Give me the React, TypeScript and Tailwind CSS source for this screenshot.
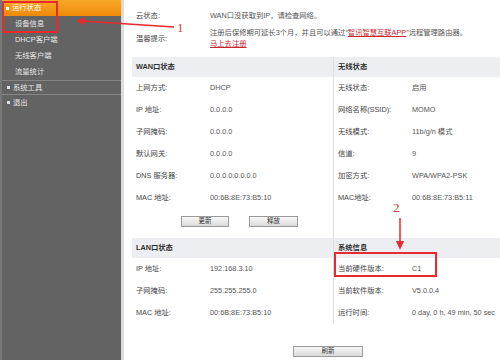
import type { ReactNode } from 'react';

const font = { fontFamily: '"Liberation Sans", "Noto Sans CJK SC", sans-serif' };

type Row = { label: string; value: string };

const wanRows: Row[] = [
  { label: '上网方式:', value: 'DHCP' },
  { label: 'IP 地址:', value: '0.0.0.0' },
  { label: '子网掩码:', value: '0.0.0.0' },
  { label: '默认网关:', value: '0.0.0.0' },
  { label: 'DNS 服务器:', value: '0.0.0.0:0.0.0.0' },
  { label: 'MAC 地址:', value: '00:6B:8E:73:B5:10' },
];

const wifiRows: Row[] = [
  { label: '无线状态:', value: '启用' },
  { label: '网络名称(SSID):', value: 'MOMO' },
  { label: '无线模式:', value: '11b/g/n 模式' },
  { label: '信道:', value: '9' },
  { label: '加密方式:', value: 'WPA/WPA2-PSK' },
  { label: 'MAC地址:', value: '00:6B:8E:73:B5:11' },
];

const lanRows: Row[] = [
  { label: 'IP 地址:', value: '192.168.3.10' },
  { label: '子网掩码:', value: '255.255.255.0' },
  { label: 'MAC 地址:', value: '00:6B:8E:73:B5:10' },
];

const sysRows: Row[] = [
  { label: '当前硬件版本:', value: 'C1' },
  { label: '当前软件版本:', value: 'V5.0.0.4' },
  { label: '运行时间:', value: '0 day, 0 h, 49 min, 50 sec' },
];

function InfoRows({ rows }: { rows: Row[] }) {
  return (
    <div className="flex flex-col">
      {rows.map((row) => (
        <div key={row.label} className="flex h-[22px] items-center pl-[4px]">
          <span className="w-[74px] shrink-0 text-[#444]">{row.label}</span>
          <span className="text-[#555]">{row.value}</span>
        </div>
      ))}
    </div>
  );
}

function Header({ children }: { children: ReactNode }) {
  return <div className="flex h-[20px] items-center bg-[#eceef1] pl-[4px] font-bold text-[#333]">{children}</div>;
}

function Btn({ children, className }: { children: ReactNode; className?: string }) {
  return (
    <div
      className={`flex h-[11px] items-center justify-center border border-[#9a9a9a] bg-gradient-to-b from-[#f7f7f7] to-[#dadada] text-[6.5px] text-[#333] ${className ?? ''}`}
    >
      {children}
    </div>
  );
}

const menu = ['设备信息', 'DHCP客户端', '无线客户端', '流量统计'];

export default function App() {
  return (
    <div className="relative flex h-[360px] w-[500px] overflow-hidden bg-white text-[7.3px] leading-none" style={font}>
      {/* sidebar */}
      <aside className="flex w-[121px] shrink-0 flex-col border-l-[2px] border-[#777] bg-[#636363] text-[#e6e6e6]">
        <div className="flex h-[16px] items-center gap-[3px] bg-gradient-to-b from-[#f9a825] to-[#ef8a05] pl-[4px] text-white">
          <span className="h-[3px] w-[3px] bg-white" />
          运行状态
        </div>
        {menu.map((item) => (
          <div key={item} className="flex h-[16px] items-center pl-[13px]">
            {item}
          </div>
        ))}
        <div className="flex h-[15px] items-center gap-[3px] border-y border-[#858585] pl-[5px]">
          <span className="h-[3px] w-[3px] bg-[#ddd]" />
          系统工具
        </div>
        <div className="flex h-[15px] items-center gap-[3px] pl-[5px]">
          <span className="h-[3px] w-[3px] bg-[#ddd]" />
          退出
        </div>
      </aside>
      <div className="w-[3px] shrink-0 bg-[#dcdcdc]" />

      {/* content */}
      <main className="flex flex-1 flex-col pl-[8px]">
        <div className="flex flex-col pl-[4px] pt-[11px]">
          <div className="flex h-[9px] items-center">
            <span className="w-[74px] shrink-0 text-[#444]">云状态:</span>
            <span className="text-[#555]">WAN口没获取到IP，请检查网络。</span>
          </div>
          <div className="mt-[9px] flex items-center">
            <span className="w-[74px] shrink-0 text-[#444]">温馨提示:</span>
            <div className="flex flex-col gap-[4px] text-[#555]">
              <span>
                注册后保修期可延长3个月，并且可以通过“<span className="text-[#c7282e] underline">智讯智慧互联APP</span>”远程管理路由器。
              </span>
              <span className="text-[#c7282e] underline">马上去注册</span>
            </div>
          </div>
        </div>

        <div className="mt-[9px] grid grid-cols-[201px_1fr]">
          <div className="flex flex-col">
            <Header>WAN口状态</Header>
            <InfoRows rows={wanRows} />
            <div className="flex h-[29px] pl-[49px] pt-[7px]">
              <Btn className="w-[48px]">更新</Btn>
              <Btn className="ml-[20px] w-[49px]">释放</Btn>
            </div>
          </div>
          <div className="flex flex-col border-l border-[#dedede]">
            <Header>无线状态</Header>
            <InfoRows rows={wifiRows} />
          </div>

          <div className="flex flex-col">
            <Header>LAN口状态</Header>
            <InfoRows rows={lanRows} />
          </div>
          <div className="flex flex-col border-l border-[#dedede]">
            <Header>系统信息</Header>
            <InfoRows rows={sysRows} />
          </div>
        </div>

        <div className="flex pl-[161px] pt-[22px]">
          <Btn className="w-[70px]">刷新</Btn>
        </div>
      </main>

      {/* annotations */}
      <div className="absolute left-[2px] top-[1px] h-[32px] w-[56px] border-2 border-[#e62a2e]" />
      <div className="absolute left-[334px] top-[252px] h-[25px] w-[103px] border-2 border-[#e62a2e]" />
      <svg className="absolute left-0 top-0" width="500" height="360" viewBox="0 0 500 360">
        <line x1="174" y1="27" x2="82" y2="21" stroke="#e62a2e" strokeWidth="1.5" />
        <polygon points="76,21 85,17 84,25" fill="#e62a2e" />
        <line x1="400" y1="218" x2="400" y2="243" stroke="#e62a2e" strokeWidth="1.5" />
        <polygon points="400,250 396,241 404,241" fill="#e62a2e" />
      </svg>
      <span className="absolute left-[177px] top-[21px] text-[13px] text-[#d03a3a]" style={{ fontFamily: '"Liberation Serif", serif' }}>
        1
      </span>
      <span className="absolute left-[393px] top-[201px] text-[13px] text-[#d03a3a]" style={{ fontFamily: '"Liberation Serif", serif' }}>
        2
      </span>
    </div>
  );
}
